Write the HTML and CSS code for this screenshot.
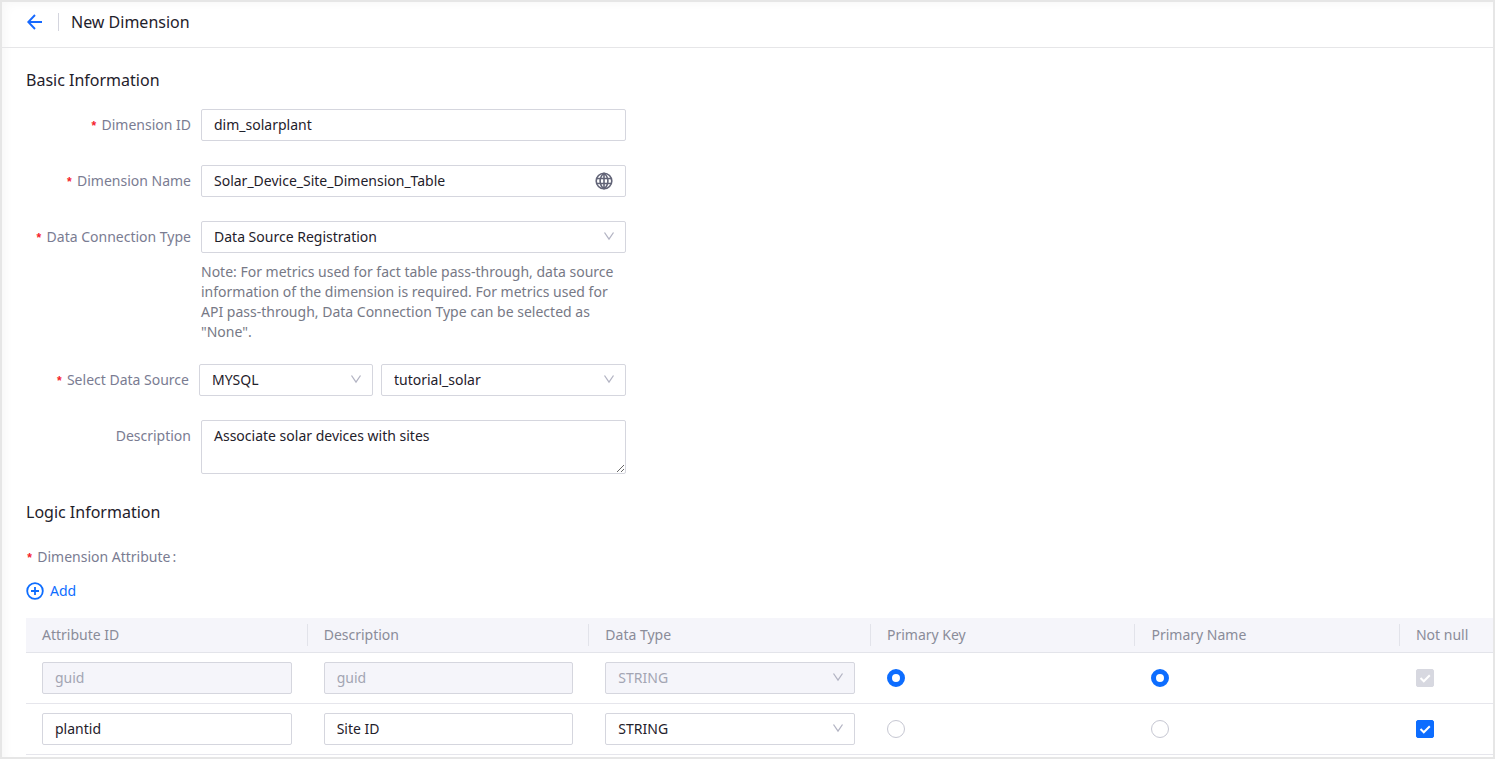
FILE: index.html
```html
<!DOCTYPE html>
<html lang="en">
<head>
<meta charset="utf-8">
<title>New Dimension</title>
<link rel="stylesheet" href="styles.css">
</head>
<body>
<div class="frame">
  <header class="topbar">
    <button class="back" type="button" aria-label="Back">
      <svg width="16" height="16" viewBox="0 0 16 16" fill="none" stroke="currentColor" stroke-width="1.9"><path d="M9 1 2.300 8 9 15M2.500 8h13.500"/></svg>
    </button>
    <span class="divider"></span>
    <h1 class="page-title">New Dimension</h1>
  </header>
  <main class="content">
    <h2 class="section-title">Basic Information</h2>
    <form class="form">
      <div class="row">
        <label class="label required" for="dim-id">Dimension ID</label>
        <input class="control" id="dim-id" type="text" value="dim_solarplant">
      </div>
      <div class="row">
        <label class="label required" for="dim-name">Dimension Name</label>
        <div class="field">
          <input class="control" id="dim-name" type="text" value="Solar_Device_Site_Dimension_Table">
          <button class="globe" type="button" aria-label="Languages">
            <svg width="18" height="18" viewBox="0 0 18 18" fill="none" stroke="currentColor" stroke-width="1.6"><circle cx="9" cy="9" r="7.800"/><path d="M9 1C3.800 5.500 3.800 12.500 9 17M9 1c5.200 4.500 5.200 11.500 0 16M9 1v16M2 6.500h14M2 11.500h14"/></svg>
          </button>
        </div>
      </div>
      <div class="row">
        <label class="label required" for="conn-type">Data Connection Type</label>
        <div class="field">
          <select class="control" id="conn-type"><option>Data Source Registration</option><option>None</option></select>
          <svg class="chevron" width="12" height="10" viewBox="0 0 12 10"><path d="M1.500 1.500 6 8l4.500-6.500"/></svg>
        </div>
        <p class="note">Note: For metrics used for fact table pass-through, data source information of the dimension is required. For metrics used for API pass-through, Data Connection Type can be selected as "None".</p>
      </div>
      <div class="row row-source">
        <label class="label required" for="source-kind">Select Data Source</label>
        <div class="pair">
          <div class="field">
            <select class="control" id="source-kind"><option>MYSQL</option></select>
            <svg class="chevron" width="12" height="10" viewBox="0 0 12 10"><path d="M1.500 1.500 6 8l4.500-6.500"/></svg>
          </div>
          <div class="field">
            <select class="control" aria-label="Data source"><option>tutorial_solar</option></select>
            <svg class="chevron" width="12" height="10" viewBox="0 0 12 10"><path d="M1.500 1.500 6 8l4.500-6.500"/></svg>
          </div>
        </div>
      </div>
      <div class="row">
        <label class="label" for="desc">Description</label>
        <textarea class="control area" id="desc" rows="2">Associate solar devices with sites</textarea>
      </div>
    </form>

    <h2 class="section-title section-logic">Logic Information</h2>
    <p class="attr-label required">Dimension Attribute<span class="colon">:</span></p>
    <button class="add" type="button">
      <svg width="18" height="18" viewBox="0 0 18 18" fill="none" stroke="currentColor" stroke-width="1.800"><circle cx="9" cy="9" r="7.800"/><path d="M9 5v8M5 9h8"/></svg>
      Add
    </button>
    <table class="table">
      <colgroup><col class="col-wide"><col class="col-wide"><col class="col-wide"><col class="col-mid"><col class="col-mid"><col></colgroup>
      <thead>
        <tr>
          <th scope="col">Attribute ID</th><th scope="col">Description</th><th scope="col">Data Type</th><th scope="col">Primary Key</th><th scope="col">Primary Name</th><th scope="col">Not null</th>
        </tr>
      </thead>
      <tbody>
        <tr>
          <td><input class="control" type="text" value="guid" aria-label="Attribute ID" disabled></td>
          <td><input class="control" type="text" value="guid" aria-label="Description" disabled></td>
          <td><div class="field"><select class="control" aria-label="Data Type" disabled><option>STRING</option></select><svg class="chevron" width="12" height="10" viewBox="0 0 12 10"><path d="M1.500 1.500 6 8l4.500-6.500"/></svg></div></td>
          <td><input class="radio" type="radio" name="pk" aria-label="Primary Key guid" checked></td>
          <td><input class="radio" type="radio" name="pn" aria-label="Primary Name guid" checked></td>
          <td><span class="tick"><input class="check" type="checkbox" aria-label="Not null guid" checked disabled><svg class="mark" width="18" height="18" viewBox="0 0 18 18"><path d="m4.500 9 3.300 3.300 6-6"/></svg></span></td>
        </tr>
        <tr>
          <td><input class="control" type="text" value="plantid" aria-label="Attribute ID"></td>
          <td><input class="control" type="text" value="Site ID" aria-label="Description"></td>
          <td><div class="field"><select class="control" aria-label="Data Type"><option>STRING</option></select><svg class="chevron" width="12" height="10" viewBox="0 0 12 10"><path d="M1.500 1.500 6 8l4.500-6.500"/></svg></div></td>
          <td><input class="radio" type="radio" name="pk" aria-label="Primary Key plantid"></td>
          <td><input class="radio" type="radio" name="pn" aria-label="Primary Name plantid"></td>
          <td><span class="tick"><input class="check" type="checkbox" aria-label="Not null plantid" checked><svg class="mark" width="18" height="18" viewBox="0 0 18 18"><path d="m4.500 9 3.300 3.300 6-6"/></svg></span></td>
        </tr>
      </tbody>
    </table>
  </main>
</div>
</body>
</html>
```
FILE: styles.css
```css
* { box-sizing: border-box; }

body {
  margin: 0;
  font-family: "Noto Sans", "Open Sans", sans-serif;
  font-size: 14px;
  line-height: 20px;
  color: #1f212b;
  background: #fff;
}

h1, h2, p { margin: 0; font-weight: 400; }

button {
  padding: 0;
  border: 0;
  background: none;
  font: inherit;
  color: inherit;
  cursor: pointer;
}

svg { display: block; }

.frame {
  min-height: 100vh;
  border: 2px solid #e6e6e6;
  box-shadow: inset 6px 4px 10px -2px rgba(0, 0, 0, 0.03);
}

.topbar {
  display: flex;
  align-items: center;
  height: 46px;
  padding: 0 24px 6px;
  border-bottom: 1px solid #e6e6e8;
}

.back { color: #1669ff; }

.divider {
  width: 1px;
  height: 18px;
  margin: 0 12px 0 16px;
  background: #d4d5de;
}

.page-title,
.section-title {
  font-size: 16px;
  line-height: 24px;
}

.content { padding: 20px 0 0 24px; }

.form {
  display: flex;
  flex-direction: column;
  gap: 24px;
  max-width: 600px;
  margin-top: 17px;
}

.row {
  display: grid;
  grid-template-columns: 165px 1fr;
  column-gap: 10px;
}

.row-source {
  grid-template-columns: 163px 1fr;
  margin-top: -2px;
}

.label {
  line-height: 32px;
  text-align: right;
  color: #7a7c92;
}

.required::before {
  content: "*";
  margin-right: 4px;
  font-family: "Liberation Mono", monospace;
  font-size: 12px;
  font-weight: 700;
  line-height: 1;
  color: #f5222d;
}

.field { position: relative; }

.control {
  display: block;
  width: 100%;
  height: 32px;
  padding: 0 12px;
  border: 1px solid #d5d6de;
  border-radius: 2px;
  background: #fff;
  font: inherit;
  color: #1f212b;
  appearance: none;
  outline: 0;
}

input.control { padding-bottom: 2px; }

.control:disabled {
  background: #f5f5fa;
  color: #a3a5b3;
  opacity: 1;
}

.area {
  height: 54px;
  padding: 5px 12px;
  resize: vertical;
}

.chevron {
  position: absolute;
  top: 10px;
  right: 11px;
  fill: none;
  stroke: #b3b4c3;
  stroke-width: 1.3;
  pointer-events: none;
}

.globe {
  position: absolute;
  top: 7px;
  right: 13px;
  color: #626477;
}

.note {
  grid-column: 2;
  padding-top: 9px;
  color: #777986;
}

.pair {
  display: grid;
  grid-template-columns: 174fr 245fr;
  gap: 8px;
}

.section-logic { margin-top: 26px; }

.attr-label {
  margin-top: 23px;
  color: #7a7c92;
}

.colon { margin-left: 2px; }

.add {
  display: flex;
  align-items: center;
  gap: 6px;
  margin-top: 14px;
  color: #0d6dff;
}

.table {
  width: 100%;
  margin-top: 17px;
  border-collapse: separate;
  border-spacing: 0;
  table-layout: fixed;
}

.col-wide { width: 19.2%; }
.col-mid { width: 18.03%; }

.table th {
  position: relative;
  height: 35px;
  padding: 0 16px;
  border-bottom: 1px solid #e3e4ea;
  background: #f5f5fa;
  font-weight: 400;
  text-align: left;
  color: #8a8c99;
}

.table th:not(:last-child)::after {
  content: "";
  position: absolute;
  top: 6px;
  right: 0;
  width: 1px;
  height: 22px;
  background: #e2e3ea;
}

.table td {
  height: 51px;
  padding: 0 16px;
  border-bottom: 1px solid #e6e6ec;
}

.radio,
.check {
  display: block;
  width: 18px;
  height: 18px;
  margin: 0;
  border: 1px solid #c6c7d2;
  background: #fff;
  appearance: none;
}

.radio { border-radius: 50%; }
.radio:checked { border: 5px solid #0d6dff; }

.check { border-radius: 2px; }
.check:checked { border-color: #0d6dff; background: #0d6dff; }
.check:checked:disabled { border-color: #d7d8e0; background: #d7d8e0; }

.tick {
  display: block;
  position: relative;
  width: 18px;
}

.mark {
  position: absolute;
  top: 0;
  left: 0;
  fill: none;
  stroke: #fff;
  stroke-width: 2;
  pointer-events: none;
}
```
